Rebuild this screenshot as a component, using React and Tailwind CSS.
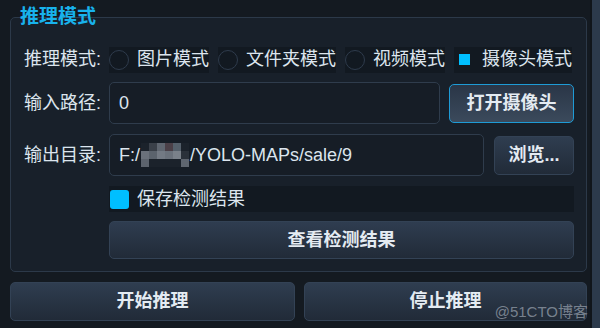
import React from 'react'

const FONT = { fontFamily: '"Liberation Sans", "Noto Sans CJK SC", sans-serif' }

const MOSAIC = [
  ['#1b222b', '#3a4049', '#5f6670', '#4b4048', '#55606b', '#1b222b'],
  ['#6a717b', '#5b636d', '#737a84', '#6b727c', '#7a818a', '#2a313a'],
  ['#5c636d', '#1b222b', '#1b222b', '#1b222b', '#1b222b', '#5f6670'],
]

function Radio({ label, checked }) {
  return (
    <div className="flex h-[26px] items-center gap-[8px] bg-[#121921]">
      <div className="flex h-[20px] w-[20px] items-center justify-center">
        {checked ? (
          <span className="h-[11px] w-[11px] bg-[#00bfff]" />
        ) : (
          <span className="h-[20px] w-[20px] rounded-full border-[1.5px] border-[#2e3b4c]" />
        )}
      </div>
      <span>{label}</span>
    </div>
  )
}

function Label({ text }) {
  return <span className="w-[85px] shrink-0 pl-[13px] box-content">{text}</span>
}

function Btn({ children, className = '' }) {
  return (
    <button
      className={`flex items-center justify-center rounded-[5px] border border-[#334255] bg-gradient-to-b from-[#2f3d50] to-[#212b38] font-bold text-[#e4ebf2] ${className}`}
    >
      {children}
    </button>
  )
}

export default function App() {
  return (
    <div className="flex h-[328px] w-[600px] overflow-hidden bg-[#141a21] text-[18px] text-[#dce5ee]" style={FONT}>
      <div className="flex w-[590px] flex-col pl-[10px] pr-[3px] pt-[17px]">
        <div className="relative flex h-[255px] flex-col gap-[9px] rounded-[5px] border border-[#2c3949] bg-[#18202a] pt-[28px]">
          <span className="absolute left-[9px] top-[-13px] text-[19px] font-bold leading-[24px] text-[#18b2ec]">推理模式</span>

          <div className="flex items-center">
            <Label text="推理模式:" />
            <div className="flex gap-[9px]">
              <Radio label="图片模式" />
              <Radio label="文件夹模式" />
              <Radio label="视频模式" />
              <Radio label="摄像头模式" checked />
            </div>
          </div>

          <div className="flex items-center">
            <Label text="输入路径:" />
            <div className="flex h-[42px] w-[331px] items-center rounded-[5px] border border-[#2f3c4c] bg-[#161d26] pl-[9px]">0</div>
            <button className="ml-[9px] flex h-[39px] w-[125px] items-center justify-center rounded-[5px] border border-[#1e9bd6] bg-gradient-to-b from-[#2a3647] to-[#3b4a5c] font-bold text-[#e4ebf2]">
              打开摄像头
            </button>
          </div>

          <div className="mt-[1px] flex items-center">
            <Label text="输出目录:" />
            <div className="flex h-[42px] w-[375px] items-center rounded-[5px] border border-[#2f3c4c] bg-[#161d26] pl-[9px]">
              <span>F:/</span>
              <span className="mx-[1px] grid grid-cols-[repeat(6,8px)] grid-rows-[repeat(3,8px)]">
                {MOSAIC.flat().map((c, i) => (
                  <span key={i} style={{ background: c }} />
                ))}
              </span>
              <span>/YOLO-MAPs/sale/9</span>
            </div>
            <Btn className="ml-[10px] h-[39px] w-[80px]">浏览...</Btn>
          </div>

          <div className="mt-[1px] flex items-center">
            <span className="w-[98px] shrink-0" />
            <div className="flex h-[26px] w-[465px] items-center gap-[8px] bg-[#121921]">
              <span className="ml-[1px] h-[19px] w-[19px] rounded-[3px] bg-[#00bfff]" />
              <span>保存检测结果</span>
            </div>
          </div>

          <div className="flex items-center">
            <span className="w-[98px] shrink-0" />
            <Btn className="h-[38px] w-[465px]">查看检测结果</Btn>
          </div>
        </div>

        <div className="relative mt-[10px] flex gap-[9px]">
          <Btn className="h-[39px] w-[285px]">开始推理</Btn>
          <Btn className="h-[39px] w-[283px]">停止推理</Btn>
          <span className="absolute right-[-1px] top-[21px] text-[15px] leading-[18px] text-[#8e98a4]/80">@51CTO博客</span>
        </div>
      </div>
      <div className="w-[10px] border-l-2 border-[#10151a] bg-[#2c3a4b]" />
    </div>
  )
}
